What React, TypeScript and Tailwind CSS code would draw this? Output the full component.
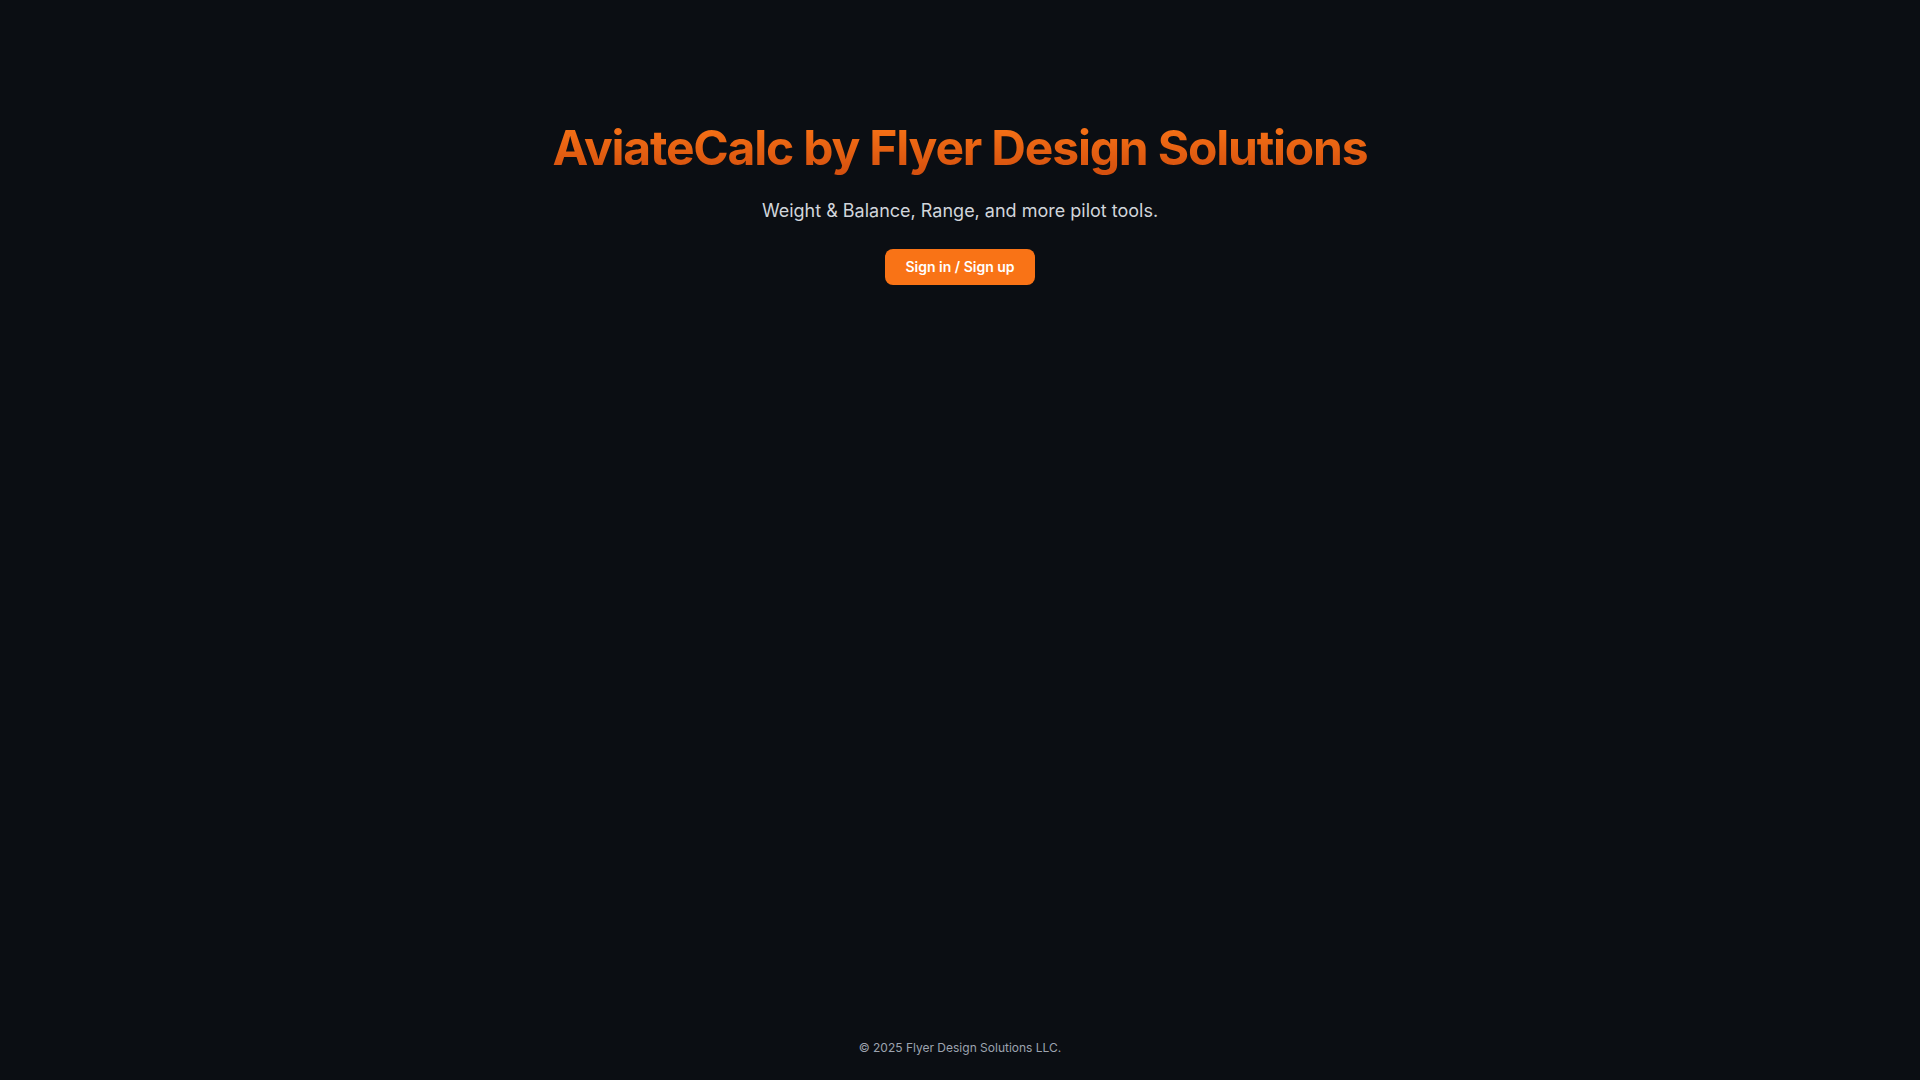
export default function App() {
  return (
    <div
      className="min-h-screen flex flex-col bg-[#0b0e13] text-gray-200"
      style={{ fontFamily: 'Inter, "Noto Sans", sans-serif' }}
    >
      <main className="flex-1 flex flex-col items-center text-center px-6 pt-[124px]">
        <h1 className="text-5xl font-bold tracking-tight bg-gradient-to-b from-[#f97316] to-[#d24e0e] bg-clip-text text-transparent pb-1">
          AviateCalc by Flyer Design Solutions
        </h1>
        <p className="mt-[21px] text-lg text-[#d1d5db]">
          Weight &amp; Balance, Range, and more pilot tools.
        </p>
        <button className="mt-6 rounded-lg bg-[#f97316] px-5 py-2 text-sm font-semibold text-white hover:bg-[#ea580c]">
          Sign in / Sign up
        </button>
      </main>

      <footer className="py-6 text-center text-xs text-[#9ca3af]">
        © 2025 Flyer Design Solutions LLC.
      </footer>
    </div>
  )
}
